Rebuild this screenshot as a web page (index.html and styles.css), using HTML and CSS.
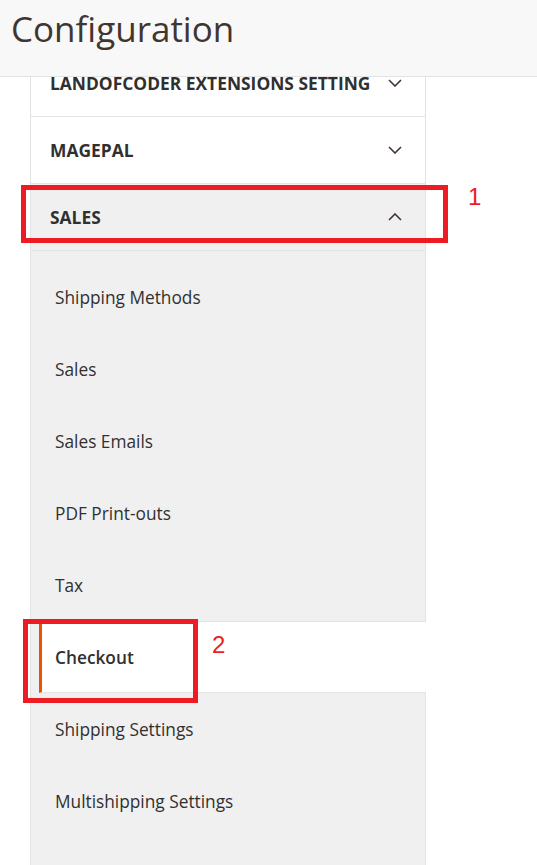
FILE: index.html
```html
<!DOCTYPE html>
<html lang="en">
<head>
<meta charset="utf-8">
<title>Configuration</title>
<link rel="stylesheet" href="styles.css">
</head>
<body>
<header class="page-header">
  <h1 class="page-title">Configuration</h1>
</header>
<nav class="config-nav">
  <div class="nav-title">
    <span>LANDOFCODER EXTENSIONS SETTING</span>
    <svg class="chev" viewBox="0 0 14 8" width="14" height="8"><polyline points="1,1 7,7 13,1"/></svg>
  </div>
  <div class="nav-title">
    <span>MAGEPAL</span>
    <svg class="chev" viewBox="0 0 14 8" width="14" height="8"><polyline points="1,1 7,7 13,1"/></svg>
  </div>
  <div class="nav-title open">
    <span>SALES</span>
    <svg class="chev" viewBox="0 0 14 8" width="14" height="8"><polyline points="1,7 7,1 13,7"/></svg>
  </div>
  <ul class="nav-items">
    <li class="nav-item">Shipping Methods</li>
    <li class="nav-item">Sales</li>
    <li class="nav-item">Sales Emails</li>
    <li class="nav-item">PDF Print-outs</li>
    <li class="nav-item">Tax</li>
    <li class="nav-item current">Checkout</li>
    <li class="nav-item">Shipping Settings</li>
    <li class="nav-item">Multishipping Settings</li>
  </ul>
</nav>
<div class="mark mark-1"></div>
<div class="mark-label label-1">1</div>
<div class="mark mark-2"></div>
<div class="mark-label label-2">2</div>
</body>
</html>
```
FILE: styles.css
```css
html, body {
  margin: 0;
  padding: 0;
  background: #ffffff;
  height: 865px;
  overflow: hidden;
}
body {
  font-family: "Open Sans", "Liberation Sans", sans-serif;
  color: #303030;
  position: relative;
}
.page-header {
  position: relative;
  z-index: 2;
  height: 76px;
  background: #f8f8f8;
  border-bottom: 1px solid #e3e3e3;
  display: flex;
  align-items: flex-start;
}
.page-title {
  margin: 0;
  padding: 7px 0 0 11px;
  font-size: 35px;
  font-weight: 400;
  line-height: 44px;
  color: #41362f;
}
.config-nav {
  margin-top: -27px;
  margin-left: 30px;
  width: 394px;
  border-left: 1px solid #e3e3e3;
  border-right: 1px solid #e3e3e3;
  min-height: 900px;
  background: #f0f0f0;
}
.nav-title {
  height: 66px;
  border-bottom: 1px solid #e3e3e3;
  background: #ffffff;
  display: flex;
  align-items: center;
  justify-content: space-between;
  padding: 0 23px 0 19px;
  font-size: 17.4px;
  font-weight: 700;
  color: #303030;
}
.nav-title.open {
  background: #f0f0f0;
}
.chev {
  fill: none;
  stroke: #41362f;
  stroke-width: 1.6;
  stroke-linecap: butt;
  stroke-linejoin: miter;
}
.nav-items {
  list-style: none;
  margin: 0;
  padding: 10px 0 0 8px;
}
.nav-item {
  height: 72px;
  box-sizing: border-box;
  display: flex;
  align-items: center;
  padding-left: 13px;
  border-left: 3px solid transparent;
  font-size: 17.3px;
  color: #303030;
}
.nav-item.current {
  background: #ffffff;
  border-left-color: #eb5202;
  border-top: 1px solid #e3e3e3;
  border-bottom: 1px solid #e3e3e3;
  margin-right: -1px;
  font-weight: 600;
}
.mark {
  position: absolute;
  border: 5px solid #ed1c24;
  box-sizing: border-box;
  z-index: 3;
}
.mark-1 {
  left: 21px;
  top: 185px;
  width: 427px;
  height: 58px;
}
.mark-2 {
  left: 23px;
  top: 619px;
  width: 175px;
  height: 84px;
}
.mark-label {
  position: absolute;
  z-index: 3;
  font-family: "Liberation Sans", Arial, sans-serif;
  font-size: 24px;
  line-height: 24px;
  color: #ed1c24;
}
.label-1 {
  left: 468px;
  top: 185px;
}
.label-2 {
  left: 212px;
  top: 633px;
}
```
